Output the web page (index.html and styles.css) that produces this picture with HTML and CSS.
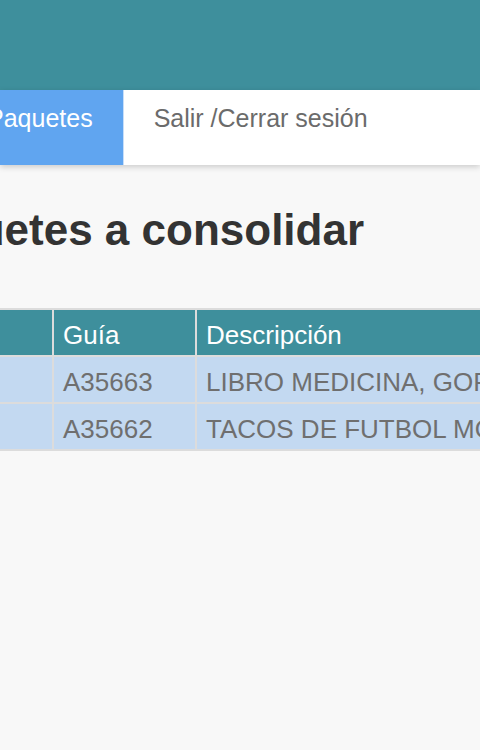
FILE: index.html
```html
<!DOCTYPE html>
<html lang="es">
<head>
	<meta charset="UTF-8">
	<meta name="viewport" content="width=device-width">
	<title>Paquetes a consolidar</title>
	<link rel="stylesheet" href="styles.css">
</head>
<body>
	<header class="topbar"></header>
	<nav class="menu">
		<a href="javascript:;" class="menu-item active">Paquetes</a>
		<a href="javascript:;" class="menu-item">Salir /Cerrar sesión</a>
	</nav>
	<main class="content">
		<h3 class="title">Paquetes a consolidar</h3>
		<table class="packages">
			<colgroup>
				<col class="col-check">
				<col class="col-guide">
				<col class="col-desc">
				<col class="col-extra">
			</colgroup>
			<thead>
				<tr>
					<th></th>
					<th>Guía</th>
					<th>Descripción</th>
					<th>Peso</th>
				</tr>
			</thead>
			<tbody>
				<tr>
					<td></td>
					<td>A35663</td>
					<td>LIBRO MEDICINA, GORRA</td>
					<td>2.5</td>
				</tr>
				<tr>
					<td></td>
					<td>A35662</td>
					<td>TACOS DE FUTBOL MOCHILA</td>
					<td>3.1</td>
				</tr>
			</tbody>
		</table>
	</main>
</body>
</html>
```

FILE: styles.css
```css
html,body{
	margin: 0;padding: 0;
}
body{
	overflow: hidden;
	background-color: #f8f8f8;
	font-family: "Liberation Sans", Arial, sans-serif;
	color: #333;
}
a{
	text-decoration: none;
}
.topbar{
	height: 90px;
	background-color: #3e8f9c;
}
.menu{
	display: flex;
	height: 75px;
	background-color: #fff;
	box-shadow: 0 2px 6px rgba(0,0,0,.18);
	position: relative;
}
.menu-item{
	display: block;
	padding: 10px 30px 0;
	font-size: 25px;
	line-height: 36px;
	color: #6b6b6b;
	white-space: nowrap;
}
.menu-item.active{
	margin-left: -43px;
	background-color: #60a5f0;
	color: #fff;
	border-right: 1px solid #c7def9;
}
.content{
	padding-top: 41px;
}
.title{
	margin: 0 0 54px -103px;
	font-size: 44px;
	font-weight: bold;
	line-height: 1.1;
	white-space: nowrap;
}
.packages{
	margin-left: -60px;
	width: 860px;
	table-layout: fixed;
	border-collapse: collapse;
	font-size: 26px;
	line-height: 36px;
	white-space: nowrap;
}
.col-check{
	width: 112px;
}
.col-guide{
	width: 143px;
}
.col-desc{
	width: 440px;
}
.packages th,
.packages td{
	padding: 7px 9px 2px;
	border: 2px solid #dcdcdc;
	text-align: left;
	font-weight: normal;
	overflow: hidden;
}
.packages th{
	background-color: #3e8f9c;
	color: #fff;
}
.packages td{
	background-color: #c3d9f1;
	color: #6f6f6f;
}
```
